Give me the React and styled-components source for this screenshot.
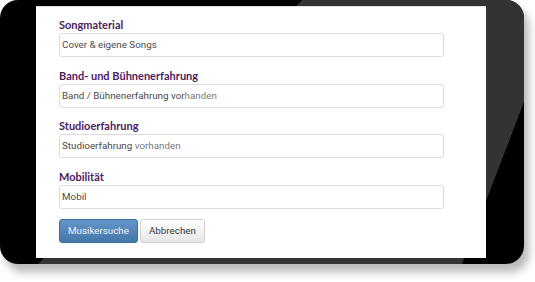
import React from "react";
import styled, { createGlobalStyle } from "styled-components";

const GlobalStyle = createGlobalStyle`
  html, body {
    margin: 0;
    padding: 0;
    background: #ffffff;
  }
  body {
    width: 535px;
    height: 282px;
    overflow: hidden;
  }
`;

const Stage = styled.div`
  width: 535px;
  height: 282px;
  background: #ffffff;
`;

const Shadowed = styled.div`
  width: 524px;
  height: 264px;
  border-radius: 18px;
  box-shadow: 5px 8px 9px rgba(0, 0, 0, 0.28);
`;

const Phone = styled.div`
  position: relative;
  width: 524px;
  height: 264px;
  box-sizing: border-box;
  padding: 6px 38px 6px 36px;
  background: #000000;
  border-radius: 18px;
  overflow: hidden;
`;

const Glare = styled.svg`
  position: absolute;
  left: 0;
  top: 0;
  width: 524px;
  height: 264px;
`;

const Screen = styled.div`
  position: relative;
  height: 100%;
  box-sizing: border-box;
  background: #ffffff;
  border-top: 1px solid #e2e2e2;
  padding: 12px 42px 0 23px;
  display: flex;
  flex-direction: column;
  gap: 12.67px;
`;

const Group = styled.div`
  display: flex;
  flex-direction: column;
  gap: 2px;
`;

const Label = styled.div`
  font-family: Lato, "Open Sans", sans-serif;
  font-weight: 700;
  font-size: 11px;
  line-height: 12px;
  color: #4e2160;
`;

const Field = styled.div`
  height: 24px;
  box-sizing: border-box;
  border: 1px solid #dcdcdc;
  border-radius: 3px;
  padding: 0 2px;
  font-family: Roboto, "Liberation Sans", sans-serif;
  font-size: 9.8px;
  line-height: 22px;
  color: #555555;
  white-space: pre;
`;

const Tone = styled.span`
  color: ${(p) => (p.$light ? "#7a7a7a" : "#4a4a4a")};
`;

const Buttons = styled.div`
  display: flex;
  gap: 2px;
  margin-top: -2.67px;
`;

const Button = styled.div`
  height: 24px;
  box-sizing: border-box;
  padding: 0 8px;
  display: flex;
  align-items: center;
  border-radius: 3px;
  font-family: Roboto, "Liberation Sans", sans-serif;
  font-size: 9.8px;
  border: 1px solid ${(p) => (p.$primary ? "#3d6d9c" : "#d2d2d2")};
  color: ${(p) => (p.$primary ? "#eef4fa" : "#3a3a3a")};
  background: ${(p) =>
    p.$primary
      ? "linear-gradient(to bottom, #6596c9 0%, #4677ab 100%)"
      : "linear-gradient(to bottom, #ffffff 0%, #e6e6e6 100%)"};
`;

const fields = [
  { label: "Songmaterial", parts: [["Cover & eigene Songs", false]] },
  {
    label: "Band- und Bühnenerfahrung",
    parts: [
      ["Band / Bühnenerfahrung vor", false],
      ["handen", true],
    ],
  },
  {
    label: "Studioerfahrung",
    parts: [
      ["Studioerfahrung", false],
      [" vorhanden", true],
    ],
  },
  { label: "Mobilität", parts: [["Mobil", false]] },
];

export default function App() {
  return (
    <Stage>
      <GlobalStyle />
      <Shadowed>
        <Phone>
          <Glare viewBox="0 0 524 264">
            <polygon points="302,0 524,0 524,102 462,264 38,264" fill="#333333" />
          </Glare>
          <Screen>
            {fields.map((f) => (
              <Group key={f.label}>
                <Label>{f.label}</Label>
                <Field>
                  {f.parts.map(([t, light], i) => (
                    <Tone key={i} $light={light}>
                      {t}
                    </Tone>
                  ))}
                </Field>
              </Group>
            ))}
            <Buttons>
              <Button $primary>Musikersuche</Button>
              <Button>Abbrechen</Button>
            </Buttons>
          </Screen>
        </Phone>
      </Shadowed>
    </Stage>
  );
}
